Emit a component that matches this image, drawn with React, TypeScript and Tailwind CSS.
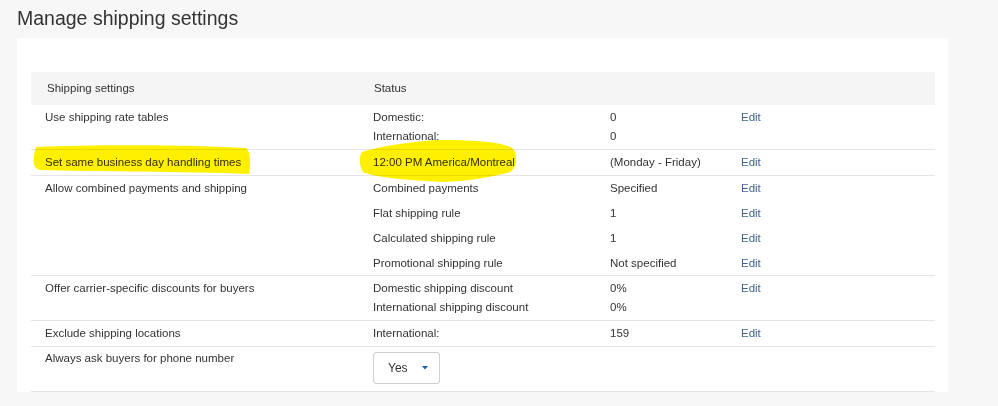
import React from "react";

type SubRow = {
  label: string;
  value: string;
  edit?: boolean;
  h?: string;
};

type Row = {
  title: string;
  lead: "short" | "tall";
  subs: SubRow[];
};

const rows: Row[] = [
  {
    title: "Use shipping rate tables",
    lead: "short",
    subs: [
      { label: "Domestic:", value: "0", edit: true },
      { label: "International:", value: "0" },
    ],
  },
  {
    title: "Set same business day handling times",
    lead: "tall",
    subs: [{ label: "12:00 PM America/Montreal", value: "(Monday - Friday)", edit: true }],
  },
  {
    title: "Allow combined payments and shipping",
    lead: "tall",
    subs: [
      { label: "Combined payments", value: "Specified", edit: true },
      { label: "Flat shipping rule", value: "1", edit: true },
      { label: "Calculated shipping rule", value: "1", edit: true },
      { label: "Promotional shipping rule", value: "Not specified", edit: true, h: "h-[24px] leading-[25px]" },
    ],
  },
  {
    title: "Offer carrier-specific discounts for buyers",
    lead: "short",
    subs: [
      { label: "Domestic shipping discount", value: "0%", edit: true },
      { label: "International shipping discount", value: "0%" },
    ],
  },
  {
    title: "Exclude shipping locations",
    lead: "tall",
    subs: [{ label: "International:", value: "159", edit: true, h: "h-[24px] leading-[24px]" }],
  },
];

const SettingsRow = ({ row }: { row: Row }) => {
  const short = row.lead === "short";
  return (
    <div
      className={`flex border-b border-[#e6e6e6] ${short ? "pt-[3px] pb-[3px]" : ""}`}
    >
      <div
        className={`w-[342px] shrink-0 pl-[14px] ${short ? "leading-[19px]" : "leading-[25px]"}`}
      >
        {row.title}
      </div>
      <div className="flex-1">
        {row.subs.map((sub) => (
          <div
            key={sub.label}
            className={`grid grid-cols-[237px_131px_1fr] ${
              sub.h ?? (short ? "h-[19px] leading-[19px]" : "h-[25px] leading-[25px]")
            }`}
          >
            <span>{sub.label}</span>
            <span>{sub.value}</span>
            <span>
              {sub.edit && <a className="cursor-pointer text-[#41648e]">Edit</a>}
            </span>
          </div>
        ))}
      </div>
    </div>
  );
};

// marker strokes drawn over the table
const Highlights = () => (
  <svg
    className="pointer-events-none absolute left-0 top-0 mix-blend-multiply"
    width="998"
    height="406"
    viewBox="0 0 998 406"
  >
    <path
      d="M36 147 C 100 144, 200 145, 246 148 C 251 152, 251 168, 249 174 C 180 171, 100 172, 40 170 C 33 169, 32 160, 36 147 Z"
      fill="#fff000"
    />
    <path
      d="M362 152 C 380 146, 420 140, 445 140 C 480 140, 510 143, 514 150 C 518 160, 516 168, 510 172 C 490 178, 460 182, 440 182 C 410 180, 375 178, 363 172 C 359 166, 359 156, 362 152 Z"
      fill="#fff000"
    />
  </svg>
);

export default function App() {
  return (
    <div
      className="relative h-[406px] w-full overflow-hidden bg-[#f7f7f7] text-[#333]"
      style={{ fontFamily: '"Liberation Sans", Arial, sans-serif' }}
    >
      <h1 className="pl-[17px] pt-[6px] text-[19.5px] leading-[24px] font-normal text-[#333]">
        Manage shipping settings
      </h1>

      <div className="ml-[17px] mt-[8px] w-[931px] bg-white pl-[14px] pr-[13px] pt-[34px] text-[11.5px]">
        <div className="flex h-[33px] items-center bg-[#f5f5f5]">
          <div className="w-[342px] shrink-0 pl-[16px]">Shipping settings</div>
          <div className="pl-px">Status</div>
        </div>

        {rows.map((row) => (
          <SettingsRow key={row.title} row={row} />
        ))}

        <div className="flex border-b border-[#e6e6e6] pb-[7px]">
          <div className="w-[342px] shrink-0 pl-[14px] pt-[2px] leading-[19px]">
            Always ask buyers for phone number
          </div>
          <div className="pt-[5px]">
            <button className="flex h-[32px] w-[67px] items-center rounded-[3px] border border-[#cfcfcf] bg-white pl-[14px] text-[12px] text-[#333]">
              <span>Yes</span>
              <svg className="ml-[14px]" width="6" height="4" viewBox="0 0 6 4">
                <path d="M0 0 L6 0 L3 3.5 Z" fill="#1d5fa8" />
              </svg>
            </button>
          </div>
        </div>
      </div>

      <Highlights />
    </div>
  );
}
